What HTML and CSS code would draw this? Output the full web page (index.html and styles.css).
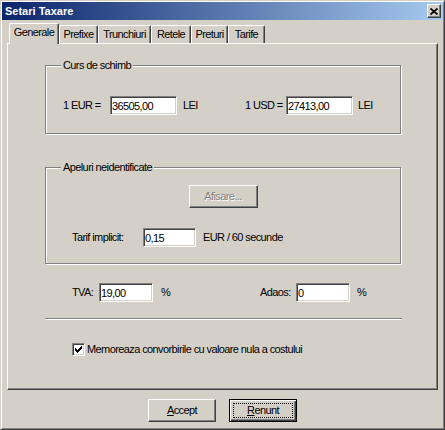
FILE: index.html
```html
<!DOCTYPE html>
<html>
<head>
<meta charset="utf-8">
<title>Setari Taxare</title>
<link rel="stylesheet" href="styles.css">
</head>
<body>
<div class="window">
  <div class="titlebar">
    <span class="title">Setari Taxare</span>
    <span class="close"><svg width="8" height="7" viewBox="0 0 8 7"><path d="M0.5 0.5 L7.5 6.5 M7.5 0.5 L0.5 6.5" stroke="#000" stroke-width="1.7" fill="none"/></svg></span>
  </div>
  <div class="tabs">
    <div class="tab active w50">Generale</div>
    <div class="tab w39">Prefixe</div>
    <div class="tab w53">Trunchiuri</div>
    <div class="tab w40">Retele</div>
    <div class="tab w37">Preturi</div>
    <div class="tab w37">Tarife</div>
  </div>
  <div class="panel">
    <div class="group g1">
      <div class="legend">Curs de schimb</div>
      <div class="row r-eur">
        <span class="lbl w47">1 EUR =</span>
        <input class="field w67" type="text" value="36505,00">
        <span class="lbl ml6 w62">LEI</span>
        <span class="lbl w41">1 USD =</span>
        <input class="field w67" type="text" value="27413,00">
        <span class="lbl ml5">LEI</span>
      </div>
    </div>
    <div class="group g2">
      <div class="legend">Apeluri neidentificate</div>
      <button class="btn disabled afisare" type="button">Afisare...</button>
      <div class="row r-tarif">
        <span class="lbl w71">Tarif implicit:</span>
        <input class="field w53" type="text" value="0,15">
        <span class="lbl ml7">EUR / 60 secunde</span>
      </div>
    </div>
    <div class="row r-tva">
      <span class="lbl w27">TVA:</span>
      <input class="field w54" type="text" value="19,00">
      <span class="lbl ml8 w99">%</span>
      <span class="lbl w36">Adaos:</span>
      <input class="field w54" type="text" value="0">
      <span class="lbl ml7">%</span>
    </div>
    <div class="sep"></div>
    <div class="row r-check">
      <span class="check"><svg width="7" height="7" viewBox="0 0 7 7"><path d="M0 2h1v3h-1z M1 3h1v3h-1z M2 4h1v3h-1z M3 3h1v3h-1z M4 2h1v3h-1z M5 1h1v3h-1z M6 0h1v3h-1z" fill="#000"/></svg></span>
      <span class="check-label">Memoreaza convorbirile cu valoare nula a costului</span>
    </div>
  </div>
  <div class="buttons">
    <button class="btn" type="button"><u>A</u>ccept</button>
    <button class="btn default" type="button"><span class="focus"><u>R</u>enunt</span></button>
  </div>
</div>
</body>
</html>
```
FILE: styles.css
```css
body {
  margin: 0;
  font-family: "Liberation Sans", Arial, sans-serif;
  font-size: 11px;
  line-height: 13px;
  letter-spacing: -0.6px;
  color: #000;
  background: #d4d0c8;
}

.window {
  width: 445px;
  height: 430px;
  box-sizing: border-box;
  background: #d4d0c8;
  border: 1px solid;
  border-color: #d4d0c8 #404040 #404040 #d4d0c8;
  box-shadow: inset 1px 1px #fff, inset -1px -1px #808080;
  padding: 1px;
}

.titlebar {
  height: 18px;
  display: flex;
  align-items: center;
  justify-content: space-between;
  background: linear-gradient(to right, #0a246a, #a6caf0);
  padding: 0 2px 0 3px;
}

.title {
  color: #fff;
  font-weight: bold;
  letter-spacing: 0;
}

.close {
  width: 14px;
  height: 14px;
  box-sizing: border-box;
  background: #d4d0c8;
  border: 1px solid;
  border-color: #fff #404040 #404040 #fff;
  box-shadow: inset -1px -1px #808080;
  display: flex;
  align-items: center;
  justify-content: center;
}

.close svg { display: block; }

.tabs {
  display: flex;
  align-items: flex-end;
  height: 20px;
  margin-top: 3px;
  padding-left: 7px;
}

.tab {
  flex: none;
  height: 18px;
  box-sizing: border-box;
  border-top: 1px solid #fff;
  border-left: 1px solid #fff;
  border-right: 1px solid #404040;
  box-shadow: inset -1px 0 #808080;
  border-radius: 2px 2px 0 0;
  padding-top: 2px;
  text-align: center;
  background: #d4d0c8;
}

.tab.active {
  height: 21px;
  margin-bottom: -1px;
  position: relative;
  z-index: 1;
}

.panel {
  width: 431px;
  height: 347px;
  box-sizing: border-box;
  margin-left: 5px;
  border: 1px solid;
  border-color: #fff #404040 #404040 #fff;
  box-shadow: inset -1px -1px #808080;
}

.group {
  margin-left: 37px;
  width: 356px;
  box-sizing: border-box;
  border: 1px solid #808080;
  box-shadow: inset 1px 1px #fff, 1px 1px #fff;
}

.g1 { margin-top: 21px; height: 69px; }
.g2 { margin-top: 33px; height: 97px; }

.legend {
  width: fit-content;
  height: 13px;
  margin: -7px 0 0 15px;
  padding: 0 2px;
  background: #d4d0c8;
}

.row {
  display: flex;
  align-items: center;
  height: 19px;
}

.r-eur { margin-top: 24px; padding-left: 17px; }
.r-tarif { margin-top: 20px; padding-left: 26px; }
.r-tva { margin-top: 19px; padding-left: 64px; }
.r-check { margin-top: 23px; padding-left: 64px; height: 13px; }

.lbl { flex: none; white-space: nowrap; }

.field {
  flex: none;
  height: 19px;
  box-sizing: border-box;
  margin: 0;
  padding: 0 1px;
  border: 1px solid;
  border-color: #808080 #fff #fff #808080;
  box-shadow: inset 1px 1px #404040, inset -1px -1px #d4d0c8;
  background: #fff;
  color: #000;
  font-family: inherit;
  font-size: 11px;
  letter-spacing: inherit;
  outline: none;
}

.sep {
  margin: 16px 0 0 37px;
  width: 357px;
  border-top: 1px solid #808080;
  border-bottom: 1px solid #fff;
}

.check {
  flex: none;
  width: 13px;
  height: 13px;
  box-sizing: border-box;
  border: 1px solid;
  border-color: #808080 #fff #fff #808080;
  box-shadow: inset 1px 1px #404040, inset -1px -1px #d4d0c8;
  background: #fff;
  display: flex;
  align-items: center;
  justify-content: center;
}

.check svg { display: block; }

.check-label { margin-left: 2px; white-space: nowrap; }

.btn {
  width: 68px;
  height: 23px;
  box-sizing: border-box;
  margin: 0;
  padding: 0;
  border: 1px solid;
  border-color: #fff #404040 #404040 #fff;
  box-shadow: inset -1px -1px #808080;
  border-radius: 0;
  background: #d4d0c8;
  color: #000;
  font-family: inherit;
  font-size: 11px;
  line-height: 13px;
  letter-spacing: inherit;
  display: flex;
  align-items: center;
  justify-content: center;
}

.btn.disabled {
  color: #808080;
  text-shadow: 1px 1px #fff;
}

.afisare {
  width: 69px;
  margin: 11px auto 0;
}

.btn.default {
  border: 1px solid #000;
  box-shadow: inset 1px 1px #fff, inset -1px -1px #404040, inset -2px -2px #808080;
}

.focus {
  width: 60px;
  height: 15px;
  box-sizing: border-box;
  border: 1px dotted #000;
  display: flex;
  align-items: center;
  justify-content: center;
}

.buttons {
  display: flex;
  justify-content: center;
  gap: 13px;
  margin-top: 9px;
}

.w27 { width: 27px; }
.w36 { width: 36px; }
.w37 { width: 37px; }
.w39 { width: 39px; }
.w40 { width: 40px; }
.w41 { width: 41px; }
.w47 { width: 47px; }
.w50 { width: 50px; }
.w53 { width: 53px; }
.w54 { width: 54px; }
.w62 { width: 62px; }
.w67 { width: 67px; }
.w71 { width: 71px; }
.w99 { width: 99px; }
.ml5 { margin-left: 5px; }
.ml6 { margin-left: 6px; }
.ml7 { margin-left: 7px; }
.ml8 { margin-left: 8px; }
```
